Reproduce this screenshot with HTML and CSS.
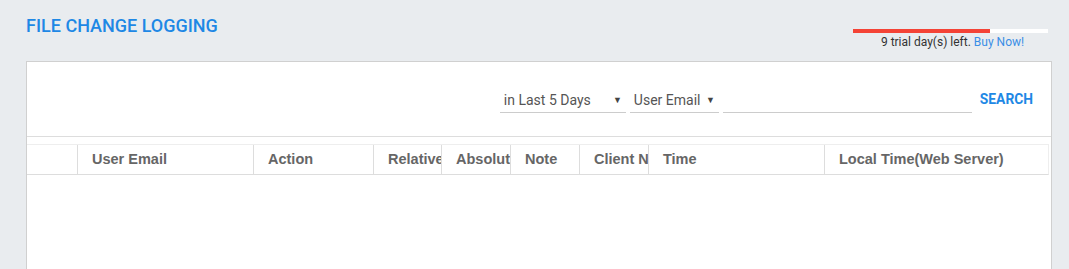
FILE: index.html
```html
<!DOCTYPE html>
<html lang="en">

<head>
    <meta charset="UTF-8">
    <meta name="viewport" content="width=device-width, initial-scale=1.0">
    <title>File Change Logging</title>
    <link rel="stylesheet" href="styles.css">
</head>

<body>
    <div class="page">
        <div class="top-bar">
            <h1 class="title">FILE CHANGE LOGGING</h1>
            <div class="trial">
                <div class="trial-bar">
                    <div class="trial-fill" style="width: 70%"></div>
                </div>
                <div class="trial-text">9 trial day(s) left. <a href="#">Buy Now!</a></div>
            </div>
        </div>

        <div class="panel">
            <div class="filters">
                <div class="field range">
                    <span>in Last 5 Days</span>
                    <span class="arrow">&#9660;</span>
                </div>
                <div class="field column">
                    <span>User Email</span>
                    <span class="arrow">&#9660;</span>
                </div>
                <div class="field query"></div>
                <a class="search" href="#">SEARCH</a>
            </div>

            <div class="log-table">
                <div class="head">
                    <div class="cell"></div>
                    <div class="cell">User Email</div>
                    <div class="cell">Action</div>
                    <div class="cell">Relative</div>
                    <div class="cell">Absolute</div>
                    <div class="cell">Note</div>
                    <div class="cell">Client Name</div>
                    <div class="cell">Time</div>
                    <div class="cell">Local Time(Web Server)</div>
                </div>
            </div>
        </div>
    </div>
</body>

</html>
```

FILE: styles.css
```css
body {
    margin: 0;
    background-color: #e9ecef;
    font-family: Roboto, "Liberation Sans", sans-serif;
    color: #333;
}

.page {
    padding: 0 17px 0 26px;
}

.top-bar {
    display: flex;
    justify-content: space-between;
    align-items: flex-start;
    height: 46px;
    padding-top: 15px;
}

.title {
    margin: 0;
    font-size: 18px;
    font-weight: 500;
    line-height: 21px;
    color: #1e88e5;
}

.trial {
    width: 195px;
    margin-top: 14px;
    margin-right: 4px;
}

.trial-bar {
    height: 4px;
    background-color: #fff;
}

.trial-fill {
    height: 100%;
    background-color: #f44336;
}

.trial-text {
    margin-top: 2px;
    padding-left: 4px;
    font-size: 12px;
    line-height: 14px;
    text-align: center;
    color: #333;
}

.trial-text a {
    color: #3a8ee6;
    text-decoration: none;
}

.panel {
    background-color: #fff;
    border: 1px solid #d0d0d0;
    border-bottom: none;
    height: 220px;
}

.filters {
    display: flex;
    justify-content: flex-end;
    align-items: flex-start;
    height: 75px;
    padding-right: 18px;
    border-bottom: 1px solid #ddd;
    box-sizing: border-box;
}

.field {
    display: flex;
    justify-content: space-between;
    align-items: center;
    height: 30px;
    margin-top: 21px;
    margin-right: 4px;
    padding: 5px 4px 0;
    border-bottom: 1px solid #ccc;
    box-sizing: border-box;
    font-size: 14px;
    color: #555;
}

.field .arrow {
    font-size: 9px;
    color: #444;
}

.range {
    width: 126px;
}

.column {
    width: 89px;
}

.query {
    width: 249px;
}

.search {
    margin: 29px 0 0 4px;
    font-size: 13.8px;
    font-weight: 700;
    color: #1e88e5;
    text-decoration: none;
}

.log-table {
    margin-top: 7px;
    margin-right: 2px;
    border-top: 1px solid #eee;
    border-right: 1px solid #eee;
    border-bottom: 1px solid #ddd;
}

.head {
    display: grid;
    grid-template-columns: 51px 176px 120px 68px 69px 69px 69px 176px 1fr;
    height: 29px;
}

.cell {
    padding-left: 14px;
    overflow: hidden;
    white-space: nowrap;
    border-right: 1px solid #ddd;
    font-family: "Liberation Sans", Arial, sans-serif;
    font-size: 14.5px;
    font-weight: 700;
    line-height: 29px;
    color: #666;
}

.cell:last-child {
    border-right: none;
}
```
